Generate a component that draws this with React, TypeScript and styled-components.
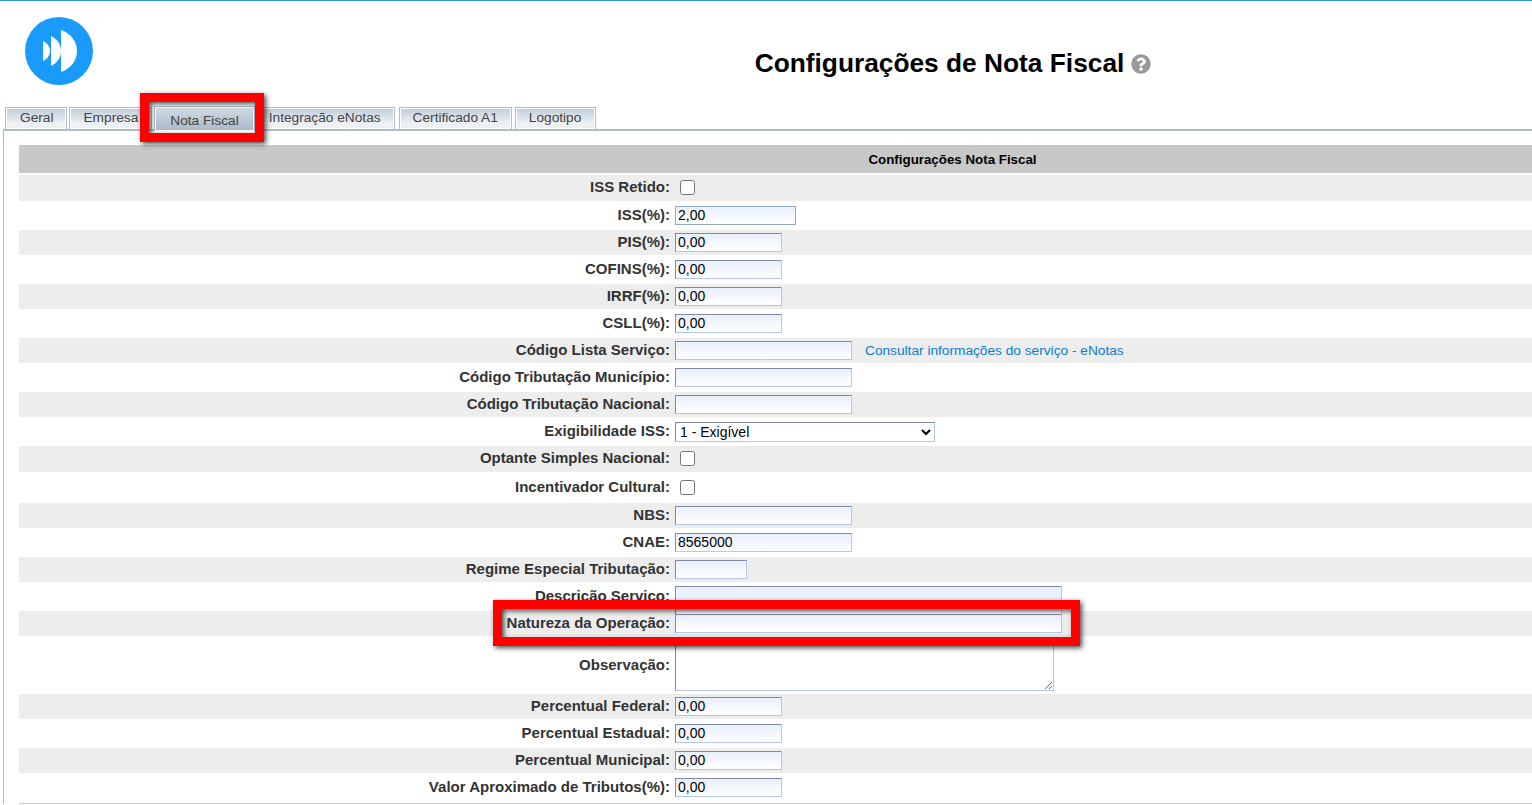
import React, { FC } from 'react';
import styled, { createGlobalStyle } from 'styled-components';
import { FaQuestionCircle } from 'react-icons/fa';

const GlobalStyle = createGlobalStyle`
  html, body {
    margin: 0;
    padding: 0;
    background: #fff;
    font-family: 'Liberation Sans', Arial, sans-serif;
  }
`;

type Field =
  | { kind: 'check' }
  | { kind: 'input'; width: number; value?: string; link?: string; focused?: boolean }
  | { kind: 'select'; value: string }
  | { kind: 'clipped' }
  | { kind: 'area' };

interface RowData {
  label: string;
  height: number;
  field: Field;
}

const TABS = ['Geral', 'Empresa', 'Nota Fiscal', 'Integração eNotas', 'Certificado A1', 'Logotipo'];

const ROWS: RowData[] = [
  { label: 'ISS Retido:', height: 26, field: { kind: 'check' } },
  { label: 'ISS(%):', height: 29, field: { kind: 'input', width: 121, value: '2,00', focused: true } },
  { label: 'PIS(%):', height: 25, field: { kind: 'input', width: 107, value: '0,00' } },
  { label: 'COFINS(%):', height: 29, field: { kind: 'input', width: 107, value: '0,00' } },
  { label: 'IRRF(%):', height: 25, field: { kind: 'input', width: 107, value: '0,00' } },
  { label: 'CSLL(%):', height: 29, field: { kind: 'input', width: 107, value: '0,00' } },
  {
    label: 'Código Lista Serviço:',
    height: 25,
    field: { kind: 'input', width: 177, link: 'Consultar informações do serviço - eNotas' },
  },
  { label: 'Código Tributação Município:', height: 29, field: { kind: 'input', width: 177 } },
  { label: 'Código Tributação Nacional:', height: 25, field: { kind: 'input', width: 177 } },
  { label: 'Exigibilidade ISS:', height: 29, field: { kind: 'select', value: '1 - Exigível' } },
  { label: 'Optante Simples Nacional:', height: 26, field: { kind: 'check' } },
  { label: 'Incentivador Cultural:', height: 31, field: { kind: 'check' } },
  { label: 'NBS:', height: 25, field: { kind: 'input', width: 177 } },
  { label: 'CNAE:', height: 29, field: { kind: 'input', width: 177, value: '8565000' } },
  { label: 'Regime Especial Tributação:', height: 25, field: { kind: 'input', width: 72 } },
  { label: 'Descrição Serviço:', height: 29, field: { kind: 'clipped' } },
  { label: 'Natureza da Operação:', height: 25, field: { kind: 'input', width: 387 } },
  { label: 'Observação:', height: 58, field: { kind: 'area' } },
  { label: 'Percentual Federal:', height: 25, field: { kind: 'input', width: 107, value: '0,00' } },
  { label: 'Percentual Estadual:', height: 29, field: { kind: 'input', width: 107, value: '0,00' } },
  { label: 'Percentual Municipal:', height: 25, field: { kind: 'input', width: 107, value: '0,00' } },
  { label: 'Valor Aproximado de Tributos(%):', height: 29, field: { kind: 'input', width: 107, value: '0,00' } },
];

// @ logo
const Logo: FC = () => (
  <svg width="68" height="68" viewBox="0 0 68 68">
    <circle cx="34" cy="34" r="34" fill="#1a9bfc" />
    <path d="M18 24c4 2 7 5.500 7 10s-3 8-7 10z" fill="#fff" />
    <path d="M26 19c6 3 10 8 10 15s-4 12-10 15z" fill="#fff" />
    <path d="M36 13c9 3 16 11 16 21s-7 18-16 21z" fill="#fff" />
  </svg>
);

const renderField = (field: Field) => {
  switch (field.kind) {
    case 'check':
      return <CheckBox type="checkbox" />;
    case 'select':
      return (
        <SelectBox defaultValue={field.value}>
          <option>{field.value}</option>
        </SelectBox>
      );
    case 'clipped':
      return <ClippedInput />;
    case 'area':
      return <TextArea />;
    default:
      return (
        <>
          <TextInput $width={field.width} $focused={field.focused} defaultValue={field.value} />
          {field.link && <ServiceLink href="#">{field.link}</ServiceLink>}
        </>
      );
  }
};

// @ page
const App: FC = () => (
  <Page>
    <GlobalStyle />
    <Header>
      <LogoCell>
        <Logo />
      </LogoCell>
      <TitleCell>
        <Title>Configurações de Nota Fiscal</Title>
        <FaQuestionCircle size={20} color="#999" />
      </TitleCell>
    </Header>
    <TabBar>
      {TABS.map((tab) => (
        <Tab key={tab} $active={tab === 'Nota Fiscal'}>
          {tab}
        </Tab>
      ))}
    </TabBar>
    <Panel>
      <SectionTitle>Configurações Nota Fiscal</SectionTitle>
      {ROWS.map((row, i) => (
        <Row key={row.label} $height={row.height} $shaded={i % 2 === 0}>
          <Label $tall={row.height > 40}>{row.label}</Label>
          <Value>{renderField(row.field)}</Value>
        </Row>
      ))}
      <BottomRule />
    </Panel>
    <TabHighlight />
    <FieldHighlight />
  </Page>
);

// @ styles
const Page = styled.div`
  position: relative;
  width: 1532px;
  height: 805px;
  overflow: hidden;
  background: #fff;
  border-top: 1px solid #2a9fd6;
  box-sizing: border-box;
`;

const Header = styled.div`
  display: flex;
  height: 89px;
`;

const LogoCell = styled.div`
  width: 374px;
  padding: 16px 0 0 25px;
  box-sizing: border-box;
`;

const TitleCell = styled.div`
  flex: 1;
  display: flex;
  justify-content: center;
  align-items: center;
  gap: 7px;
  padding-top: 36px;
`;

const Title = styled.h1`
  margin: 0;
  font-size: 26.3px;
  font-weight: 700;
  color: #000;
`;

const TabBar = styled.div`
  display: flex;
  gap: 2px;
  height: 39px;
  padding: 17px 0 0 5px;
  box-sizing: border-box;
  align-items: flex-end;
`;

const Tab = styled.div<{ $active: boolean }>`
  box-sizing: border-box;
  height: 22px;
  line-height: 20px;
  padding: 0 13px;
  font-size: 13.7px;
  color: #444;
  border: 1px solid #aebccb;
  border-bottom: none;
  box-shadow: inset 0 0 0 1px #fff;
  background: linear-gradient(#bfccd9, #eef1f4 75%);
  &:first-child {
    padding-left: 14px;
  }
  &:nth-last-child(2) {
    margin-left: 2px;
  }
  &:last-child {
    margin-left: 1px;
    padding-right: 14px;
  }
  ${(props) =>
    props.$active &&
    `
      height: 25px;
      margin-bottom: -2px;
      margin-right: -2px;
      line-height: 28px;
      padding: 0 15px;
      background: linear-gradient(#d3dbe3, #a9b8c9);
    `}
`;

const Panel = styled.div`
  border-top: 2px solid #aebccb;
  border-left: 1px solid #aebccb;
  margin-left: 3px;
  padding: 14px 0 0 15px;
`;

const SectionTitle = styled.div`
  height: 28px;
  margin-bottom: 2px;
  padding-left: 354px;
  line-height: 29px;
  background: #c8c8c8;
  text-align: center;
  font-size: 13.33px;
  font-weight: 700;
  color: #000;
`;

const Row = styled.div<{ $height: number; $shaded: boolean }>`
  display: flex;
  height: ${(props) => props.$height}px;
  background: ${(props) => (props.$shaded ? '#ededed' : '#fff')};
`;

const Label = styled.div<{ $tall: boolean }>`
  width: 654px;
  flex-shrink: 0;
  padding: 0 3px ${(props) => (props.$tall ? 1 : 3)}px 0;
  box-sizing: border-box;
  display: flex;
  align-items: center;
  justify-content: flex-end;
  font-size: 15px;
  font-weight: 700;
  color: #333;
`;

const Value = styled.div`
  flex: 1;
  margin-left: 2px;
  display: flex;
  align-items: center;
  position: relative;
`;

const fieldBorder = `
  box-sizing: border-box;
  border: 1px solid #b3c8ea;
  border-top-color: #7f8aa5;
  border-left-color: #7f8aa5;
  border-radius: 0;
  background: linear-gradient(#e8effd, #fff);
  font-family: 'Liberation Sans', Arial, sans-serif;
  font-size: 14px;
  color: #000;
  outline: none;
`;

const TextInput = styled.input<{ $width: number; $focused?: boolean }>`
  ${fieldBorder}
  width: ${(props) => props.$width}px;
  height: 19px;
  padding: 0 2px 2px;
  ${(props) => props.$focused && 'border-color: #93acbd;'}
`;

const ClippedInput = styled.input`
  ${fieldBorder}
  width: 387px;
  height: 40px;
  position: absolute;
  top: 4px;
  left: 0;
`;

const TextArea = styled.textarea`
  ${fieldBorder}
  width: 379px;
  height: 53px;
  align-self: flex-start;
  margin-top: 2px;
  background: #fff;
`;

const SelectBox = styled.select`
  ${fieldBorder}
  width: 260px;
  height: 20px;
  padding: 0;
  background: #fff;
`;

const CheckBox = styled.input`
  width: 15px;
  height: 15px;
  margin: 0 0 1px 5px;
`;

const ServiceLink = styled.a`
  margin-left: 13px;
  font-size: 13.7px;
  color: #0a7bd0;
  text-decoration: none;
`;

const BottomRule = styled.div`
  height: 1px;
  margin-top: 1px;
  background: #c8c8c8;
`;

const Highlight = styled.div`
  position: absolute;
  box-sizing: border-box;
  border: 9px solid #ff0000;
  box-shadow: 2px 2px 5px rgba(0, 0, 0, 0.7), inset 2px 2px 5px rgba(0, 0, 0, 0.7);
`;

const TabHighlight = styled(Highlight)`
  left: 140px;
  top: 92px;
  width: 124px;
  height: 49px;
`;

const FieldHighlight = styled(Highlight)`
  left: 493px;
  top: 599px;
  width: 587px;
  height: 46px;
`;

export default App;
